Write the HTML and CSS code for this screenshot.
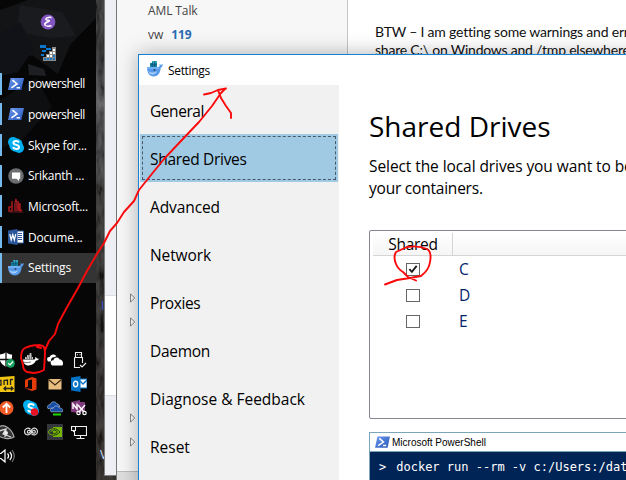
FILE: index.html
```html
<!DOCTYPE html>
<html lang="en">
<head>
<meta charset="utf-8">
<title>Desktop</title>
<link rel="stylesheet" href="styles.css">
</head>
<body>
<svg class="defs" width="0" height="0" aria-hidden="true">
  <defs>
    <linearGradient id="psg" x1="0" y1="0" x2="1" y2="1"><stop offset="0" stop-color="#6f9cf0"/><stop offset="1" stop-color="#2454b8"/></linearGradient>
    <symbol id="ps" viewBox="0 0 16 12"><path d="M2.6 0H16L13.4 12H0Z" fill="url(#psg)"/><path d="M4.5 2.2L9 6L3.4 9.8M8.6 9.8H12" fill="none" stroke="#fff" stroke-width="1.6"/></symbol>
    <symbol id="dock" viewBox="0 0 16 16">
      <path d="M3 2h7v4H3z" fill="#168aa8"/><path d="M5 0h5v2H5z" fill="#35a8bf"/><path d="M3 3.8h7M5.3 1v5M7.7 0v6" stroke="#104f70" stroke-width=".7"/>
      <path d="M0 6H11C12.5 6 13 5 12.5 2.8L14 4L16 3C15.7 5 14.8 6 13.6 7C13.6 12 10.5 15.5 6.5 15.5C2.5 15.5 0 12 0 6Z" fill="#559be9"/>
      <path d="M1 10C4 12 7 12 10 10C9 14 3 15 1 10Z" fill="#a9cffa"/><path d="M0 7H12" stroke="#8fc4ff" stroke-width="1"/><circle cx="7.5" cy="9" r="1" fill="#294b73"/>
    </symbol>
    <symbol id="skype" viewBox="0 0 16 16"><circle cx="5" cy="5" r="5" fill="#00aff0"/><circle cx="11" cy="11" r="5" fill="#00aff0"/><circle cx="8" cy="8" r="6.8" fill="#00aff0"/><path d="M11 5.5C10 3.5 5.500 3.5 5.5 6C5.5 8.5 11 7.2 11 10C11 12.5 6 12.6 5 10.2" fill="none" stroke="#fff" stroke-width="2"/></symbol>
  </defs>
</svg>
<div class="desktop">
  <svg class="wallpaper" viewBox="0 0 120 480" aria-hidden="true">
    <defs>
      <filter id="grain" x="0" y="0" width="100%" height="100%"><feTurbulence type="fractalNoise" baseFrequency=".22 .06" numOctaves="3" seed="8"/><feColorMatrix type="matrix" values=".5 0 0 0 -.12 .5 0 0 0 -.12 .5 0 0 0 -.12 0 0 0 0 1"/></filter>
      <linearGradient id="shade" x1="0" y1="0" x2="0" y2="1"><stop offset="0" stop-color="#2e2e2f"/><stop offset=".1" stop-color="#161618"/><stop offset=".17" stop-color="#3c3c3f"/><stop offset=".22" stop-color="#66666a"/><stop offset=".26" stop-color="#39393c"/><stop offset=".34" stop-color="#3a393b"/><stop offset=".42" stop-color="#24211f"/><stop offset="1" stop-color="#1a1613"/></linearGradient>
    </defs>
    <rect width="120" height="480" fill="url(#shade)"/>
    <rect width="120" height="480" filter="url(#grain)" opacity=".35"/>
  </svg>

  <div class="peek peek-a">I</div>
  <div class="peek peek-b">V</div>

  <section class="back-window"><div class="pane-top"></div><div class="pane-mid"></div><div class="pane-low"></div></section>

  <aside class="taskbar">
    <svg class="sheen" viewBox="0 0 96 480" aria-hidden="true"><path d="M0 10L28 0H96V18L70 45L58 74L32 55L0 70Z" fill="#131416"/><path d="M20 5L62 12L76 36L50 38L16 32Z" fill="#1a1b1e"/><path d="M0 34L20 22L34 48L18 72L0 76Z" fill="#111217"/><path d="M28 64L44 69L46 76L29 75Z" fill="#1d1f23"/><path d="M0 100L36 78L52 107L20 142L0 148Z" fill="#0e0f11"/></svg>
    <nav class="tasks">
      <div class="task pinned"><svg width="16" height="16" viewBox="0 0 16 16"><circle cx="8" cy="8" r="7.4" fill="#8255c0"/><path d="M11.5 3.5C8 3 5 4.2 6.2 5.8C7 6.8 9.7 5.8 9.3 6.8C8.5 8 4.4 8.5 4.7 10.5C5 12.5 9 12.4 11.5 11.8" fill="none" stroke="#fff" stroke-width="1.5"/></svg></div>
      <div class="task pinned"><svg width="16" height="16" viewBox="0 0 16 16" shape-rendering="crispEdges"><path d="M3 16V12H6V9H9V6H12V2H16V16Z" fill="#8b8b8b"/><path d="M0 0H6V3H0ZM6 3H11V5H6ZM2 5H6V7H2ZM1 9H4V11H1Z" fill="#0878d0"/><path d="M13 4H15V6H13ZM10 7H12V9H10ZM13 7H15V9H13ZM7 10H9V12H7ZM10 10H12V12H10Z" fill="#fff"/><path d="M13 10H15V12H13ZM4 13H6V15H4ZM7 13H9V15H7ZM10 13H12V15H10ZM13 13H15V15H13Z" fill="#1875bf"/></svg></div>
      <div class="task"><svg width="16" height="12"><use href="#ps"/></svg><span class="t-ps">powershell</span></div>
      <div class="task"><svg width="16" height="12"><use href="#ps"/></svg><span class="t-ps">powershell</span></div>
      <div class="task"><svg width="16" height="16"><use href="#skype"/></svg><span class="t-sk">Skype for...</span></div>
      <div class="task"><svg width="16" height="16" viewBox="0 0 16 16"><circle cx="8" cy="8" r="7.8" fill="#6d6e71"/><path d="M4 4.5H12.2V10.8H11V13L8.5 10.8H4Z" fill="#fff"/></svg><span class="t-sr">Srikanth ...</span></div>
      <div class="task"><svg width="16" height="16" viewBox="0 0 16 16"><path d="M1 9H4V13H1ZM4 3V13M7 13V6L8 1L9 9V13M11 13L10 3M12 5V13L14 12" fill="none" stroke="#a8181d" stroke-width="1.5"/><path d="M6 9L8 4L8 14M1 14H15" fill="none" stroke="#601c20" stroke-width="1"/></svg><span class="t-ms">Microsoft...</span></div>
      <div class="task"><svg width="16" height="16" viewBox="0 0 16 16"><path d="M8 2H15.5V14H8Z" fill="#fff" stroke="#2b579a"/><path d="M10 4.5H14M10 6.5H14M10 8.5H14M10 10.5H14" stroke="#2b579a"/><path d="M0 1.5L9.5 0V16L0 14.5Z" fill="#2b579a"/><path d="M1.8 5.2L3.2 10.8L4.8 5.8L6.3 10.8L7.8 5.2" fill="none" stroke="#fff" stroke-width="1.3"/></svg><span class="t-do">Docume...</span></div>
      <div class="task active"><svg width="16" height="16"><use href="#dock"/></svg><span class="t-se">Settings</span></div>
    </nav>
    <div class="tray">
      <svg viewBox="0 0 16 16"><path d="M0 2.5C4 2.5 6 1 7 0C9 2 11 2.5 13 2.5C13.5 9 11 12.5 7 15C2 12 0 9 0 2.5Z" fill="#fff"/><path d="M7 0V15M0 7.5H13" stroke="#111" stroke-width="1.3"/><circle cx="11.5" cy="11.3" r="4.4" fill="#16a05d"/><path d="M9.2 11.3L11 13L14 9.5" fill="none" stroke="#fff" stroke-width="1.2"/></svg>
      <svg viewBox="0 0 16 16"><path d="M0 7.4H11.5C12.6 7 12 5.8 12.5 4.8L14 6.5L16 6.8C15.4 8.2 14 8.5 13 8.6C11.8 11.8 9 13.4 5.5 13.4C2 13.4 .2 11 0 7.4Z" fill="#fff"/><path d="M2 6H10M4 4H9M6.6 2H8.4" stroke="#fff" stroke-width="1.5" stroke-dasharray="1.8 .4"/><path d="M0 10L4 10.7L8 10" fill="none" stroke="#222" stroke-width=".6"/></svg>
      <svg viewBox="0 0 16 16"><path d="M1 9.500C-.8 7 .3 4.500 2.700 5C3.300 2 7.500 1.500 9.500 4L7.500 5.300C5 4.800 3.600 7 4 9.500Z" fill="#fff"/><path d="M5 13.500C2.600 11.500 3.800 8 6.300 8.400C7 5 11.200 4.500 12.600 7.500C15.500 7.200 17 11 15.400 13.500Z" fill="#fff"/></svg>
      <svg viewBox="0 0 16 16"><path d="M4.5 5V.5H10.5V5M3.5 5.5H11.5V11M3.5 5.5V15.5H9M6 2.8H7M8.5 2.8H9.5M9 13L11 15L15 11" fill="none" stroke="#eee" stroke-width="1.1"/></svg>

      <svg viewBox="0 0 16 16"><path d="M0 1L15.500 0V16H0Z" fill="#f2c511"/><path d="M0 4.500H2V9H0M5 9V4.500L8.500 4V9M11.500 3V9M11.500 3.500H14M5 12.500H14M7 10.500L5 12.500L7 14.500M12 10.500L14 12.500L12 14.500" fill="none" stroke="#222" stroke-width="1.300"/></svg>
      <svg viewBox="0 0 16 16"><path d="M2 4L9 1L13.5 2.5V13.5L9 15L2 12.2L9 13V3.5L5 4.5V10.5L2 12Z" fill="#e43b09"/></svg>
      <svg viewBox="0 0 16 16"><path d="M1.5 3H14.5V13.5H1.5Z" fill="#e8bd80"/><path d="M1.5 3.5L8 9L14.5 3.5" fill="none" stroke="#3b2a14" stroke-width="1.2"/></svg>
      <svg viewBox="0 0 16 16"><path d="M8 3H16V12H8Z" fill="#fff" stroke="#0072c6"/><path d="M9 5L12 8L16 4" fill="none" stroke="#0072c6" stroke-width="1.3"/><path d="M0 1.5L9.5 0V16L0 14.5Z" fill="#0072c6"/><ellipse cx="4.6" cy="8" rx="2.1" ry="2.7" fill="none" stroke="#fff" stroke-width="1.4"/></svg>

      <svg viewBox="0 0 16 16"><circle cx="7.5" cy="8" r="7" fill="#f15a24"/><path d="M7.5 13V4M3.8 7.5L7.5 3.8L11.2 7.5" fill="none" stroke="#fff" stroke-width="1.8"/></svg>
      <svg viewBox="0 0 16 16"><use href="#skype"/><circle cx="11.5" cy="12" r="3.8" fill="#e81123"/></svg>
      <svg viewBox="0 0 16 16"><path d="M1 8.7C-.5 6.5 1 4.5 3 5C4 1 8.7 .8 10 4C12 4 13 5.5 12.5 7Z" fill="#174da5" stroke="#d2e5ff" stroke-width=".5"/><path d="M4 11.8C2.5 9.5 4.5 7.8 6.2 8.5C7 5.3 11 5 12.3 8C15 7.7 16.5 9.8 15.3 11.8Z" fill="#174da5" stroke="#d2e5ff" stroke-width=".5"/><path d="M6 13.5H14V15.5H6Z" fill="#23d900"/></svg>
      <svg viewBox="0 0 16 16"><path d="M0 2L9 0V13L0 12ZM8 2H14V12H8Z" fill="#80397b"/><path d="M2 9V4L6 9V3.5" fill="none" stroke="#fff" stroke-width="1.4"/><path d="M7 5L13 12M14 5L8 12" stroke="#fff" stroke-width="1.4"/><circle cx="7.5" cy="13" r="1.7" fill="none" stroke="#fff" stroke-width="1.2"/><circle cx="13.5" cy="13" r="1.7" fill="none" stroke="#fff" stroke-width="1.2"/></svg>

      <svg viewBox="0 0 16 16"><path d="M0 3C5-1 13 5 15 13C10 16 3 14 0 12" fill="#333" stroke="#aaa" stroke-width="1.2"/><path d="M0 7L7 5L4 10L12 13M7 5L6 13" fill="none" stroke="#ddd" stroke-width="1.3"/><circle cx="7" cy="9" r="2" fill="#eee"/></svg>
      <svg viewBox="0 0 16 16"><path d="M7.5 5.2C5 3 1.5 4.8 1.5 7.6C1.5 11 5.5 12 7.8 9.3L10 6.7C12 5 13.5 8.7 11.2 9.2C9.5 9.5 8 7 6.5 6.4C4.5 5.6 3.5 8.8 5.3 9.1C7 9.2 8 6.7 9 5.3C11.5 2.6 14.8 4.8 14.5 8C14 11 11 11.8 8.5 10" fill="none" stroke="#ddd" stroke-width="1.2"/></svg>
      <svg viewBox="0 0 16 16"><path d="M0 0H16V16H0Z" fill="#34383d"/><path d="M6 3H15V13H6Z" fill="#76b900"/><path d="M1 8C4 3.5 9 3.5 13 8C9 12.5 4 12 1 8ZM4 8C6 5.5 8.5 5.7 10.5 8C8.5 10 6 10 4 8Z" fill="none" stroke="#263514" stroke-width="1"/><path d="M1 8C2 6 4 5 6 5M1 8C2 10 4 11 6 11M3.500 8C4 7 5 6.500 6 6.500" fill="none" stroke="#76b900"/></svg>
      <svg viewBox="0 0 16 16"><path d="M5 2.5H15.5V11.5H3.5V7M9.5 11.5V14M5.5 14.5H13.5M.5 2.5H4.5V6.5H.5ZM2.5 6.5V8" fill="none" stroke="#eee" stroke-width="1.1"/></svg>

      <svg viewBox="0 0 16 16"><path d="M0 5.5H2L6 2V14L2 10.5H0M8.5 5.5C9.8 7 9.8 9 8.5 10.5M10.8 4C13 6.5 13 9.5 10.8 12" fill="none" stroke="#fff" stroke-width="1.2"/><path d="M13 2.2C16 6 16 10 13 13.8" fill="none" stroke="#777" stroke-width="1.1"/></svg>
    </div>
  </aside>

  <section class="mail">
    <div class="folders">
      <div class="folder f-aml">AML Talk</div>
      <div class="folder"><span class="f-vw">vw</span><b>119</b></div>
      <div class="arrows">
        <svg viewBox="0 0 6 10"><path d="M.5 .8L4.7 5L.5 9.2Z"/></svg><svg viewBox="0 0 6 10"><path d="M.5 .8L4.7 5L.5 9.2Z"/></svg>
        <svg class="gap" viewBox="0 0 6 10"><path d="M.5 .8L4.7 5L.5 9.2Z"/></svg><svg viewBox="0 0 6 10"><path d="M.5 .8L4.7 5L.5 9.2Z"/></svg>
      </div>
      <div class="switcher"></div>
    </div>
    <div class="message"><div class="m1">BTW – I am getting some warnings and err</div><div class="m2">share C:\ on Windows and /tmp elsewhere</div></div>
  </section>

  <section class="settings">
    <header class="titlebar"><svg width="16" height="16"><use href="#dock"/></svg><span>Settings</span></header>
    <div class="content">
      <nav class="menu">
        <div class="item i-gen">General</div>
        <div class="item selected"><span>Shared Drives</span></div>
        <div class="item i-adv">Advanced</div>
        <div class="item i-net">Network</div>
        <div class="item i-pro">Proxies</div>
        <div class="item i-dae">Daemon</div>
        <div class="item i-dia">Diagnose &amp; Feedback</div>
        <div class="item i-res">Reset</div>
      </nav>
      <main class="page">
        <h1>Shared Drives</h1>
        <p><span class="p1">Select the local drives you want to be</span><br><span class="p2">your containers.</span></p>
        <div class="drives">
          <div class="head"><span>Shared</span><span></span></div>
          <div class="row"><i class="box"><svg viewBox="0 0 12 12"><path d="M2 5.5L4.8 8.5L10 2" fill="none" stroke="#1c1c1c" stroke-width="2"/></svg></i><span>C</span></div>
          <div class="row"><i class="box"></i><span>D</span></div>
          <div class="row"><i class="box"></i><span>E</span></div>
        </div>
        <div class="shell">
          <div class="shell-title"><svg width="15" height="12"><use href="#ps"/></svg><span>Microsoft PowerShell</span></div>
          <pre><span class="prompt">&gt;</span>docker run --rm -v c:/Users:/dat</pre>
        </div>
      </main>
    </div>
  </section>

  <svg class="ink" viewBox="0 0 626 480" aria-hidden="true">
    <path d="M45 350L49 341L55 334L58 324L66 309L78 288L87 271L97 254L104 243L110 231L117 223L124 212L134 201L139 190L151 175L164 159L180 142L199 122L212 106L221 93L225 89"/>
    <path d="M204 94.5L211 93L218 90L226 88.5M218 90L221 98L226 106L231 113V118"/>
    <path d="M41 348L37 347L39 345L43 346Q45 348 45 353L44.500 362L44 370Q39 373 34 373L27 372Q23 370 23 365L21 358Q21 350 25 348Q31 345 39 345"/>
    <path d="M385 284.500L397 280L410 278L421 276Q429 270 430 262Q432 252 427 249Q418 245 407 247L396 252Q393 257 396 264Q398 269 403 272L408 277L416 280.500"/>
  </svg>
</div>
</body>
</html>
```
FILE: styles.css
```css
* { box-sizing: border-box; }
body { margin: 0; font-family: "Open Sans", "Noto Sans", sans-serif; }
.defs { position: absolute; }
.desktop { position: relative; width: 626px; height: 480px; overflow: hidden; background: #1c1815; white-space: nowrap; }
.wallpaper { position: absolute; left: 0; top: 0; width: 120px; height: 480px; }
.ink { position: absolute; left: 0; top: 0; width: 626px; height: 480px; fill: none; stroke: #fb0a0c; stroke-width: 1.9; stroke-linejoin: round; stroke-linecap: round; pointer-events: none; }

.peek { position: absolute; font-size: 12px; line-height: 14px; color: #c6dcff; }
.peek-a { left: 101px; top: 299px; color: #3b57d8; }
.peek-b { left: 100px; top: 448px; }

.back-window { position: absolute; left: 104px; top: 0; width: 14px; height: 476px; display: flex; flex-direction: column; border: solid #7d7d7d; border-width: 0 0 1px 1px; background: #eeeff5; }
.pane-top { height: 295px; }
.pane-mid { height: 101px; background: #fff; border: solid #dcdee6; border-width: 1px 0; }
.pane-low { flex: 1; }

.taskbar { position: absolute; left: 0; top: 0; width: 96px; height: 480px; background: #060607; color: #fff; overflow: hidden; }
.sheen { position: absolute; left: 0; top: 0; width: 96px; height: 480px; }
.tasks { position: relative; display: flex; flex-direction: column; padding-top: 7px; height: 348px; }
.task { display: flex; align-items: center; height: 30.7px; padding-left: 8px; gap: 4px; font-size: 12px; background: linear-gradient(#76b9ed, #76b9ed) 0 50% / 2px 22px no-repeat; }
.task svg { flex: none; }
.pinned { justify-content: center; padding: 0; background: none; }
.active { background: linear-gradient(90deg, #76b9ed 2px, #343434 2px); }
.task span { line-height: 16px; padding-top: 1px; }
.t-ps { letter-spacing: -.45px; }
.t-sk, .t-sr { letter-spacing: -.25px; }
.t-ms, .t-do, .t-se { letter-spacing: -.2px; }
.tray { position: relative; display: grid; grid-template-columns: repeat(4, 24px); grid-auto-rows: 24px; margin-left: -5px; width: 96px; place-items: center; }
.tray svg { width: 16px; height: 16px; }

.mail { position: absolute; left: 116px; top: 0; width: 510px; height: 480px; display: flex; border-left: 1px solid #777; background: #fff; }
.folders { width: 231px; flex: none; background: #f7f7f7; border-right: 1px solid #c6c6c6; display: flex; flex-direction: column; color: #444; font-size: 12px; }
.folder { height: 24px; padding-left: 31px; line-height: 22px; display: flex; gap: 8px; }
.f-aml { letter-spacing: -.1px; }
.folder b { color: #2a6ab0; letter-spacing: -.1px; }
.arrows { display: flex; flex-direction: column; gap: 14px; padding: 245px 0 0 13px; flex: 1; }
.arrows svg { width: 6px; height: 10px; fill: #fff; stroke: #777; stroke-width: .9; }
.arrows .gap { margin-top: 72px; }
.switcher { height: 9px; background: #dedede; border-top: 1px solid #bbb; }
.message { padding: 23px 0 0 27px; font-family: Lato, sans-serif; font-size: 14px; line-height: 18px; color: #111; }
.m1 { letter-spacing: -.2px; }
.m2 { letter-spacing: -.22px; }

.settings { position: absolute; left: 138px; top: 54px; width: 500px; height: 440px; border: solid #1681d5; border-width: 1px 0 0 1px; background: #fff; box-shadow: 0 0 19px rgba(0,0,0,.3); display: flex; flex-direction: column; color: #000; }
.titlebar { height: 30px; display: flex; align-items: center; gap: 5px; padding-left: 8px; font-size: 12px; letter-spacing: -.33px; }
.titlebar svg { margin-top: -2px; }
.content { flex: 1; display: flex; }
.menu { width: 200px; flex: none; background: #f1f1f1; padding: 2px 1px 0; font-size: 15.5px; }
.item { height: 48px; line-height: 49px; padding-left: 10px; }
.i-gen { letter-spacing: -.45px; }
.i-adv, .i-net { letter-spacing: -.1px; }
.i-pro { letter-spacing: -.4px; }
.i-dae { letter-spacing: -.3px; }
.selected { display: flex; align-items: stretch; background: #a0cae3; padding: 2px; margin-top: -1px; margin-bottom: 1px; letter-spacing: -.3px; }
.selected span { flex: 1; border: 1px dashed #46596a; padding-left: 7px; line-height: 45px; }
.page { padding: 22px 0 0 30px; width: 300px; }
h1 { margin: 0; font-size: 28px; line-height: 38px; font-weight: 400; }
p { margin: 10px 0 0; font-size: 15.5px; line-height: 22px; }
.p1 { letter-spacing: -.08px; }
.p2 { letter-spacing: -.22px; }
.drives { margin-top: 31px; height: 189px; border: 1px solid #828790; border-radius: 2px; padding: 2px 3px; font-size: 15.5px; color: #04246f; }
.head { display: grid; grid-template-columns: 80px 1fr; height: 23px; border-bottom: 1px solid #d5d5d5; background: linear-gradient(#fff, #f5f5f5); color: #000; line-height: 22px; text-align: center; letter-spacing: -.3px; }
.head span:first-child { border-right: 1px solid #d5d5d5; padding-left: 1px; }
.row { display: grid; grid-template-columns: 80px 1fr; align-items: center; height: 26px; }
.row span { padding-left: 6px; }
.box { width: 14px; height: 13px; margin-left: 33px; border: 1px solid #666; background: #fff; display: flex; }
.box svg { width: 12px; height: 11px; }
.shell { margin-top: 13px; height: 60px; border: 1px solid #7ba5bb; background: #012456; }
.shell-title { height: 19px; display: flex; align-items: center; gap: 2px; padding-left: 5px; background: #fff; border-bottom: 1px solid #7ba5bb; font: 10px "Liberation Sans", sans-serif; }
pre { margin: 0; padding: 8px 0 0 9px; color: #fff; font: 12px/14px "DejaVu Sans Mono", monospace; }
.prompt { margin-right: 10px; }
```
